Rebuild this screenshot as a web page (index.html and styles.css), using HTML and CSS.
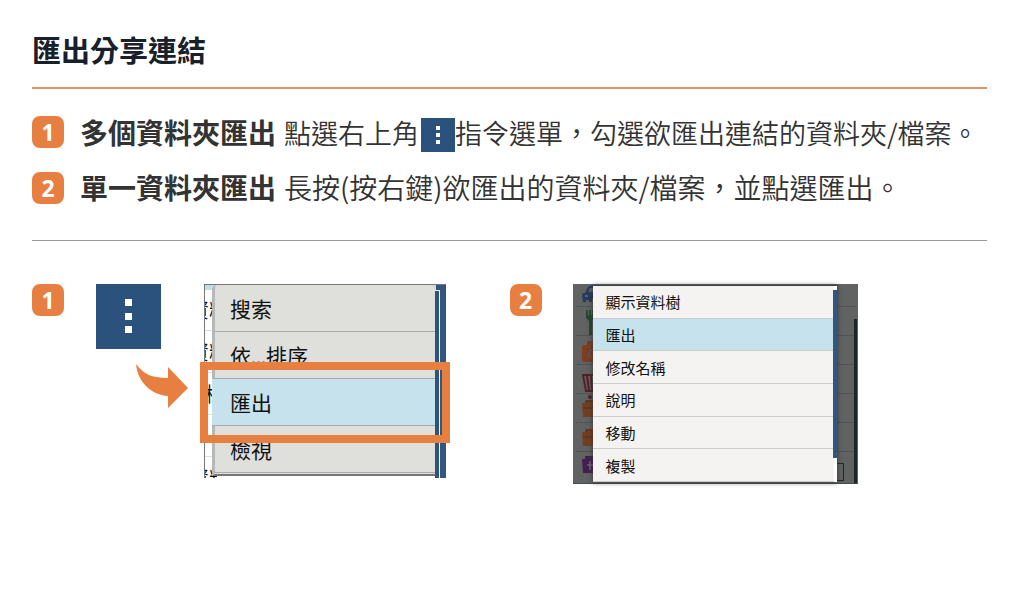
FILE: index.html
```html
<!DOCTYPE html>
<html lang="zh-Hant">
<head>
<meta charset="utf-8">
<meta name="viewport" content="width=device-width, initial-scale=1">
<title>匯出分享連結</title>
<link rel="stylesheet" href="styles.css">
</head>
<body>
<main class="page">
  <h1 class="title">匯出分享連結</h1>
  <ol class="steps">
    <li class="step">
      <span class="badge">1</span>
      <p class="step-text step-text-menu"><strong>多個資料夾匯出</strong><span>點選右上角</span><svg class="inline-icon" viewBox="0 0 34 34" aria-hidden="true"><path fill="#2a527c" d="M0 0h34v34H0z"/><path fill="#fff" d="M15 8h4v4h-4zM15 15h4v4h-4zM15 22h4v4h-4z"/></svg>指令選單，勾選欲匯出連結的資料夾/檔案。</p>
    </li>
    <li class="step">
      <span class="badge">2</span>
      <p class="step-text"><strong>單一資料夾匯出</strong><span>長按(按右鍵)欲匯出的資料夾/檔案，並點選匯出。</span></p>
    </li>
  </ol>
  <div class="examples">
    <section class="example">
      <span class="badge">1</span>
      <div class="trigger">
        <button class="more" type="button" aria-label="指令選單"><svg viewBox="0 0 65 65"><path fill="#fff" d="M29 15h7v7h-7zM29 29h7v7h-7zM29 42h7v7h-7z"/></svg></button>
        <svg class="arrow" viewBox="0 0 54 46" aria-hidden="true"><path fill="#e67f40" d="M1 0C9 11 18 14 33 14V3L53 24 33 44V32C17 31 3 19 1 0Z"/></svg>
      </div>
      <div class="phone">
        <div class="phone-rows" aria-hidden="true"><span>資料</span><span>資料</span><span class="indent">檔案</span><span></span><span>資料</span></div>
        <div class="phone-bar"></div>
        <div class="phone-rail"></div>
        <div class="sheet">
          <button type="button">搜索</button>
          <button type="button">依<span class="dots">...</span>排序</button>
          <button type="button" class="selected">匯出</button>
          <button type="button">檢視</button>
        </div>
        <div class="phone-scroll"></div>
        <div class="marker"></div>
      </div>
    </section>
    <section class="example">
      <span class="badge">2</span>
      <div class="dialog-shot">
        <svg class="backdrop" viewBox="0 0 285 200" aria-hidden="true">
          <path fill="#616262" d="M0 0h285v200H0z"/>
          <path stroke="#515253" d="M3 22.500h280M3 51.500h280M3 138.500h280M3 167.500h280M3 80.500h280M3 109.500h280"/>
          <path fill="#243b5c" d="M9 11q0-2 3-2l3-6q1-1 3-1h6v13h-5v3h-3v-2h-3v2h-3z"/><path fill="#616262" d="M15 8l2-4h6v4zM12 11h3v2h-3z"/>
          <path fill="#26482b" d="M13 28q0-2 1-2h6q1 0 1 2v6l-2 3v14h-3V37l-3-3z"/><path fill="#616262" d="M15 26h1v5h-1zM18 26h1v5h-1z"/>
          <path fill="#7e3c20" d="M9 63q0-2 3-2h2v-4h6v21H12q-3 0-3-3z"/><circle cx="20" cy="70" r="4" fill="none" stroke="#5d5554" stroke-width="2"/>
          <path fill="none" stroke="#571e25" stroke-width="2" d="M21 91H10l3 16h8M14 92l2 14M18 92l1 14"/><circle cx="17" cy="113" r="2" fill="#571e25"/>
          <path fill="#733f20" d="M9 119h3v-3h8v17H10zM9 148h3v-3h8v17H10z"/><path fill="none" stroke="#4e3324" d="M13 119v-2h7M13 148v-2h7M10 124h10M10 153h10"/>
          <path fill="#432052" d="M9 175h3v-3h8v17H10z"/><path stroke="#8b778f" d="M17 177v9M14 181h6"/>
          <path fill="#1d2628" d="M281 35h3v164h-3z"/>
          <path fill="none" stroke="#252525" d="M260 179.500h10.500v17H260"/>
          <path fill="none" stroke="#454c51" d="M18 1.500h247M0 199.500h285"/>
        </svg>
        <div class="dialog">
          <button type="button">顯示資料樹</button>
          <button type="button" class="selected">匯出</button>
          <button type="button">修改名稱</button>
          <button type="button">說明</button>
          <button type="button">移動</button>
          <button type="button">複製</button>
          <div class="dialog-scroll"></div>
        </div>
      </div>
    </section>
  </div>
</main>
</body>
</html>
```

FILE: styles.css
```css
* { box-sizing: border-box; }

body {
  margin: 0;
  background: #fff;
  color: #333;
  font-family: "Noto Sans CJK TC", sans-serif;
}

.page { padding: 23px 46px 24px 32px; }

.title {
  margin: 0;
  padding-bottom: 12px;
  border-bottom: 2px solid #e09468;
  color: #17202b;
  font-size: 29px;
  line-height: 52px;
  font-weight: 700;
}

.steps {
  margin: 0;
  padding: 15px 0 24px;
  border-bottom: 1px solid #999;
  list-style: none;
}

.step {
  display: flex;
  align-items: center;
  gap: 16px;
  min-height: 56px;
}

.badge {
  display: flex;
  flex: none;
  align-items: center;
  justify-content: center;
  width: 32px;
  height: 32px;
  border-radius: 8px;
  background: #e67f40;
  color: #fff;
  font-family: "Open Sans", sans-serif;
  font-size: 23px;
  font-weight: 700;
  line-height: 32px;
}

.step-text {
  margin: 0;
  padding-bottom: 2px;
  font-size: 28px;
  font-weight: 350;
  line-height: 40px;
}

.step-text-menu { padding: 0; font-size: 27px; }
.step-text strong { margin-right: 8px; font-size: 28px; font-weight: 700; }

.inline-icon {
  width: 34px;
  height: 34px;
  margin-left: 2px;
  vertical-align: -8px;
}

.examples {
  display: grid;
  grid-template-columns: repeat(auto-fit, minmax(420px, 1fr));
  padding-top: 43px;
}

.example { display: flex; align-items: flex-start; }

.trigger {
  display: flex;
  flex-direction: column;
  align-items: flex-start;
  gap: 15px;
  margin-left: 32px;
}

.more {
  display: block;
  width: 65px;
  height: 65px;
  padding: 0;
  border: 0;
  background: #2a527c;
}

.more svg { display: block; }
.arrow { width: 54px; height: 46px; margin-left: 39px; }

.phone {
  position: relative;
  width: 242px;
  height: 194px;
  margin-left: 15px;
  border: 1px solid #777;
  border-width: 1px 0 0 1px;
  background: #fff;
}

.phone-rows {
  position: absolute;
  inset: 4px auto 0 0;
  width: 12px;
  overflow: hidden;
  color: #111;
  font-size: 20px;
  line-height: 41px;
}

.phone-rows span {
  display: block;
  height: 42px;
  margin-left: -16px;
  border-bottom: 1px solid #ddd;
  white-space: nowrap;
}

.phone-rows .indent { margin-left: 0; }

.phone-bar {
  position: absolute;
  inset: 0 0 auto;
  height: 5px;
  background: linear-gradient(to right, #c5dbe5 96%, #34557e 96%);
}

.phone-rail {
  position: absolute;
  inset: 0 0 0 auto;
  width: 6px;
  background: #34557e;
}

.sheet {
  position: absolute;
  inset: 0 11px 2px 7px;
  display: flex;
  flex-direction: column;
  border-left: 3px solid #b4b8ba;
  border-bottom: 2px solid #777;
  border-radius: 5px 5px 0 0;
  background: #dfdfdb;
}

.sheet button {
  flex: none;
  height: 47px;
  padding: 0 15px;
  border: 0;
  border-bottom: 1px solid #aaa;
  background: none;
  color: #111;
  font: 400 21px/44px "Noto Sans CJK TC", sans-serif;
  text-align: left;
}

.sheet .dots { font-size: 18px; }

.sheet .selected {
  margin-left: -3px;
  padding-left: 18px;
  background: #c5e2ed;
}

.phone-scroll {
  position: absolute;
  inset: 6px 7px 0 auto;
  width: 4px;
  background: #2b5480;
}

.marker {
  position: absolute;
  inset: 77px -4px 35px -5px;
  border: 8px solid #e67f40;
}

.dialog-shot { position: relative; width: 285px; height: 200px; margin-left: 31px; }
.backdrop { display: block; }

.dialog {
  position: absolute;
  inset: 2px 21px 2px 20px;
  display: grid;
  grid-auto-rows: 1fr;
  background: #fff;
  box-shadow: 0 0 5px #333;
}

.dialog button {
  margin-right: 3px;
  padding: 1px 13px 0;
  border: 0;
  border-bottom: 1px solid #ccc;
  background: #f4f3f1;
  color: #111;
  font: 400 15px/20px "Noto Sans CJK TC", sans-serif;
  text-align: left;
}

.dialog .selected { background: #c5e2ed; }

.dialog-scroll {
  position: absolute;
  inset: 4px 0 24px auto;
  width: 4px;
  background: #34557e;
}
```
